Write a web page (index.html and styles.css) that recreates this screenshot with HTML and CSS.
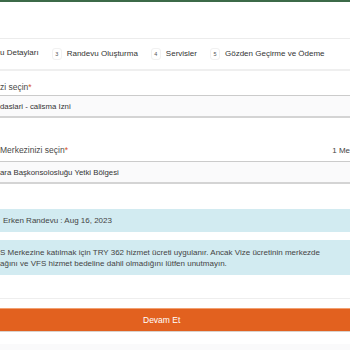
FILE: index.html
```html
<!DOCTYPE html>
<html lang="tr">
<head>
<meta charset="utf-8">
<link rel="stylesheet" href="styles.css">
</head>
<body>
<div class="topline"></div>
<div class="stepper">
  <span class="step-text">u Detayları</span>
  <span class="step"><span class="num">3</span><span class="step-text">Randevu Oluşturma</span></span>
  <span class="step"><span class="num">4</span><span class="step-text">Servisler</span></span>
  <span class="step"><span class="num">5</span><span class="step-text">Gözden Geçirme ve Ödeme</span></span>
</div>
<div class="form">
  <div class="field">
    <div class="label-row"><span class="label">zi seçin<span class="req">*</span></span></div>
    <div class="select">daslari - calisma Izni</div>
  </div>
  <div class="field field-2">
    <div class="label-row"><span class="label">Merkezinizi seçin<span class="req">*</span></span><span class="aside">1 Me</span></div>
    <div class="select">ara Başkonsolosluğu Yetki Bölgesi</div>
  </div>
  <div class="alert alert-date">Erken Randevu : Aug 16, 2023</div>
  <div class="alert alert-info">S Merkezine katılmak için TRY 362 hizmet ücreti uygulanır. Ancak Vize ücretinin merkezde<br>ağını ve VFS hizmet bedeline dahil olmadığını lütfen unutmayın.</div>
  <div class="divider"></div>
  <button class="btn">Devam Et</button>
  <div class="footer-band"></div>
</div>
</body>
</html>
```
FILE: styles.css
```css
html, body {
  margin: 0;
  padding: 0;
  background: #ffffff;
  font-family: "Liberation Sans", Arial, sans-serif;
  color: #333;
  overflow: hidden;
  width: 350px;
  height: 350px;
}
.topline {
  height: 2px;
  background: #3c6a48;
}
.stepper {
  margin-top: 36px;
  height: 30px;
  border-top: 1px solid #ececec;
  border-bottom: 2px solid #efefef;
  display: flex;
  align-items: flex-start;
  padding-top: 0;
  font-size: 8px;
  line-height: 10px;
  color: #333;
  white-space: nowrap;
}
.stepper > .step-text,
.step {
  margin-top: 9px;
}
.step {
  display: flex;
  align-items: center;
  margin-left: 13px;
}
.num {
  display: inline-flex;
  align-items: center;
  justify-content: center;
  width: 8px;
  height: 10px;
  border: 1px solid #f1f1f1;
  border-radius: 3px;
  font-size: 5.5px;
  color: #555;
  margin-right: 5px;
}
.form {
  padding-top: 9px;
}
.field {
  display: flex;
  flex-direction: column;
}
.field-2 {
  margin-top: 25px;
}
.field-2 .select {
  margin-top: 4px;
}
.label-row {
  display: flex;
  justify-content: space-between;
  font-size: 8.5px;
  color: #4a4a4a;
  height: 14px;
  align-items: center;
}
.req { color: #d9531e; }
.aside {
  font-size: 8px;
  color: #444;
}
.select {
  margin-top: 1px;
  height: 20px;
  border-top: 1px solid #cbcbcb;
  border-bottom: 2px solid #d4d4d4;
  background: #fafafb;
  font-size: 7.8px;
  color: #333;
  display: flex;
  align-items: center;
}
.alert {
  background: #d2ebf1;
  font-size: 8px;
  color: #444;
}
.alert-date {
  margin-top: 25px;
  height: 23px;
  display: flex;
  align-items: center;
  padding-left: 3px;
}
.alert-info {
  margin-top: 8px;
  padding: 7px 0 6px 0;
  line-height: 11px;
}
.divider {
  margin-top: 23px;
  height: 1px;
  background: #eeeeee;
}
.btn {
  margin-top: 9px;
  display: block;
  width: 100%;
  height: 24px;
  border: 0;
  border-top: 1px solid #f2a070;
  border-bottom: 1px solid #d9d2cc;
  background: #e2611f;
  color: #fff;
  font-family: "Liberation Sans", Arial, sans-serif;
  font-size: 8.5px;
  text-align: left;
  padding-left: 143px;
}
.footer-band {
  margin-top: 12px;
  height: 20px;
  background: #fafafb;
}
```
